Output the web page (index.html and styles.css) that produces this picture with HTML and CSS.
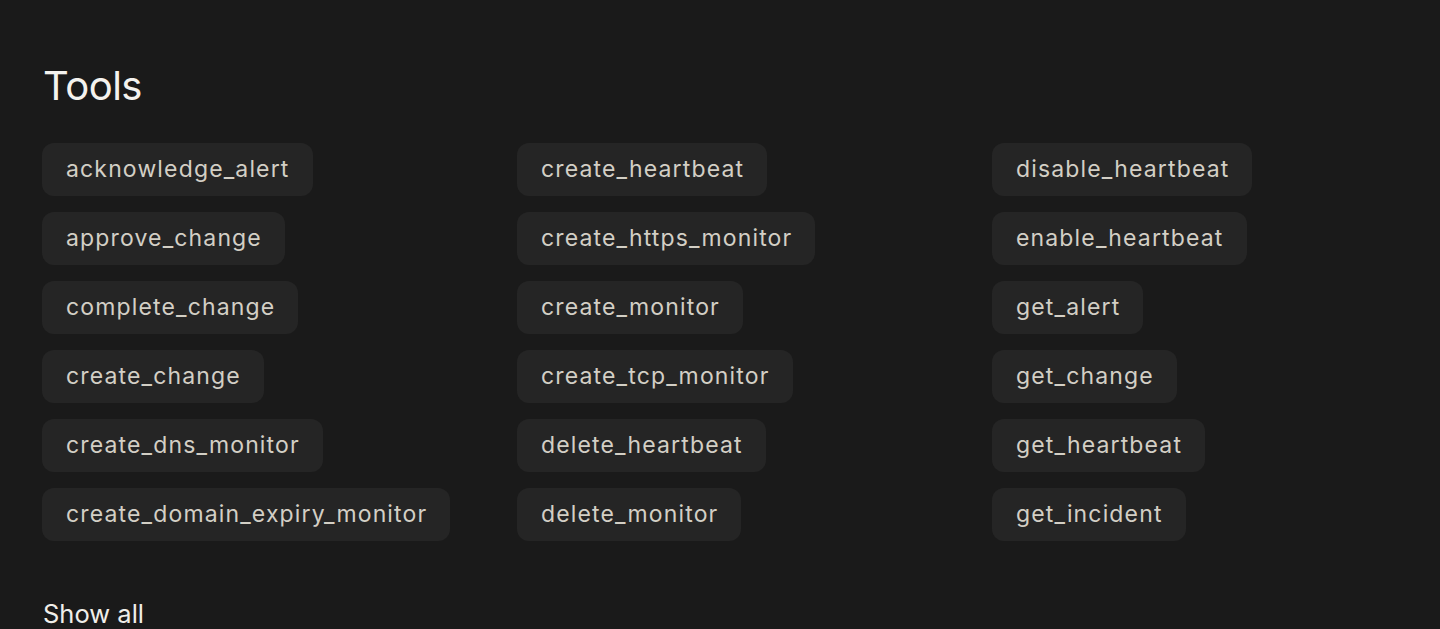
FILE: index.html
```html
<!DOCTYPE html>
<html>
<head>
<meta charset="utf-8">
<link rel="stylesheet" href="styles.css">
</head>
<body>
<section class="tools">
  <h2 class="title">Tools</h2>
  <div class="grid">
    <div class="col">
      <span class="chip">acknowledge_alert</span>
      <span class="chip">approve_change</span>
      <span class="chip">complete_change</span>
      <span class="chip">create_change</span>
      <span class="chip">create_dns_monitor</span>
      <span class="chip">create_domain_expiry_monitor</span>
    </div>
    <div class="col">
      <span class="chip">create_heartbeat</span>
      <span class="chip">create_https_monitor</span>
      <span class="chip">create_monitor</span>
      <span class="chip">create_tcp_monitor</span>
      <span class="chip">delete_heartbeat</span>
      <span class="chip">delete_monitor</span>
    </div>
    <div class="col">
      <span class="chip">disable_heartbeat</span>
      <span class="chip">enable_heartbeat</span>
      <span class="chip">get_alert</span>
      <span class="chip">get_change</span>
      <span class="chip">get_heartbeat</span>
      <span class="chip">get_incident</span>
    </div>
  </div>
  <a class="show-all">Show all</a>
</section>
</body>
</html>
```
FILE: styles.css
```css
html, body {
  margin: 0;
  padding: 0;
  background: #1a1a1a;
  font-family: Inter, "Noto Sans", sans-serif;
}
.tools {
  padding: 59px 42px 0;
}
.title {
  margin: 0 0 30px 1px;
  font-size: 40px;
  font-weight: 400;
  line-height: 54px;
  color: #f4f2ee;
  letter-spacing: -0.5px;
}
.grid {
  display: grid;
  grid-template-columns: repeat(3, 459px);
  column-gap: 16px;
}
.col {
  display: flex;
  flex-direction: column;
  align-items: flex-start;
  gap: 16px;
}
.chip {
  display: inline-block;
  background: #252525;
  color: #d3cfc5;
  font-size: 23px;
  line-height: 33px;
  letter-spacing: 1.15px;
  padding: 10px 23px 10px 24px;
  border-radius: 12px;
}
.show-all {
  display: block;
  margin-top: 56px;
  color: #f0eee9;
  font-size: 25.5px;
  line-height: 34px;
  margin-left: 1px;
}
```
